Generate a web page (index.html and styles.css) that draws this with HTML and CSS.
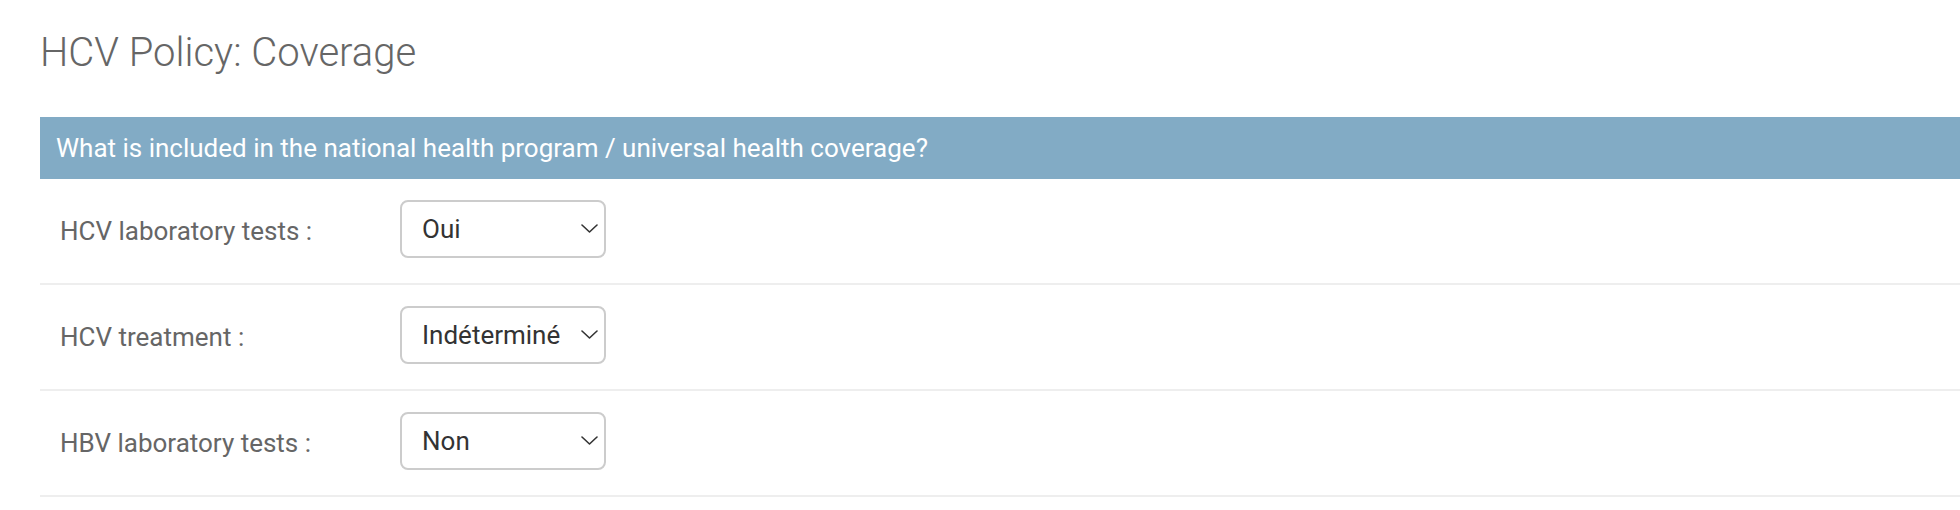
FILE: index.html
```html
<!DOCTYPE html>
<html lang="en">
<head>
<meta charset="utf-8">
<title>HCV Policy: Coverage</title>
<link rel="stylesheet" href="styles.css">
</head>
<body>
<div class="content">
  <h1 class="page-title">HCV Policy: Coverage</h1>
  <fieldset class="module">
    <h2 class="module-title">What is included in the national health program / universal health coverage?</h2>
    <div class="form-row">
      <label class="field-label" for="f1">HCV laboratory tests :</label>
      <div class="select-wrap">
        <select id="f1" class="field-select">
          <option selected>Oui</option>
          <option>Non</option>
          <option>Indéterminé</option>
        </select>
        <svg class="chevron" width="17" height="9" viewBox="0 0 17 9"><polyline points="1,1 8.5,8 16,1" fill="none" stroke="#333" stroke-width="1.6" stroke-linecap="round" stroke-linejoin="round"/></svg>
      </div>
    </div>
    <div class="form-row">
      <label class="field-label" for="f2">HCV treatment :</label>
      <div class="select-wrap">
        <select id="f2" class="field-select">
          <option>Oui</option>
          <option>Non</option>
          <option selected>Indéterminé</option>
        </select>
        <svg class="chevron" width="17" height="9" viewBox="0 0 17 9"><polyline points="1,1 8.5,8 16,1" fill="none" stroke="#333" stroke-width="1.6" stroke-linecap="round" stroke-linejoin="round"/></svg>
      </div>
    </div>
    <div class="form-row">
      <label class="field-label" for="f3">HBV laboratory tests :</label>
      <div class="select-wrap">
        <select id="f3" class="field-select">
          <option>Oui</option>
          <option selected>Non</option>
          <option>Indéterminé</option>
        </select>
        <svg class="chevron" width="17" height="9" viewBox="0 0 17 9"><polyline points="1,1 8.5,8 16,1" fill="none" stroke="#333" stroke-width="1.6" stroke-linecap="round" stroke-linejoin="round"/></svg>
      </div>
    </div>
  </fieldset>
</div>
</body>
</html>
```

FILE: styles.css
```css
html, body {
  margin: 0;
  padding: 0;
  background: #fff;
}

body {
  font-family: Roboto, "Liberation Sans", sans-serif;
  color: #333;
}

.content {
  padding: 29px 0 0 40px;
}

.page-title {
  margin: 0 0 40px;
  font-size: 40px;
  line-height: 48px;
  font-weight: 300;
  color: #666;
}

.module {
  margin: 0;
  padding: 0;
  border: none;
  min-width: 0;
}

.module-title {
  margin: 0;
  padding: 16px;
  font-size: 26px;
  line-height: 30px;
  font-weight: 400;
  color: #fff;
  background: #82abc5;
  white-space: nowrap;
}

.form-row {
  display: flex;
  align-items: flex-start;
  padding: 21px 20px 25px;
  border-bottom: 2px solid #eeeeee;
}

.field-label {
  display: block;
  width: 340px;
  flex: none;
  padding-top: 13px;
  font-size: 26px;
  line-height: 36px;
  color: #666;
}

.select-wrap {
  position: relative;
  width: 206px;
  height: 58px;
}

.field-select {
  appearance: none;
  -webkit-appearance: none;
  box-sizing: border-box;
  width: 206px;
  height: 58px;
  margin: 0;
  padding: 0 40px 0 20px;
  border: 2px solid #cccccc;
  border-radius: 8px;
  background: #fff;
  font-family: Roboto, "Liberation Sans", sans-serif;
  font-size: 26px;
  color: #333;
  outline: none;
}

.chevron {
  position: absolute;
  top: 24px;
  left: 181px;
  pointer-events: none;
}
```
